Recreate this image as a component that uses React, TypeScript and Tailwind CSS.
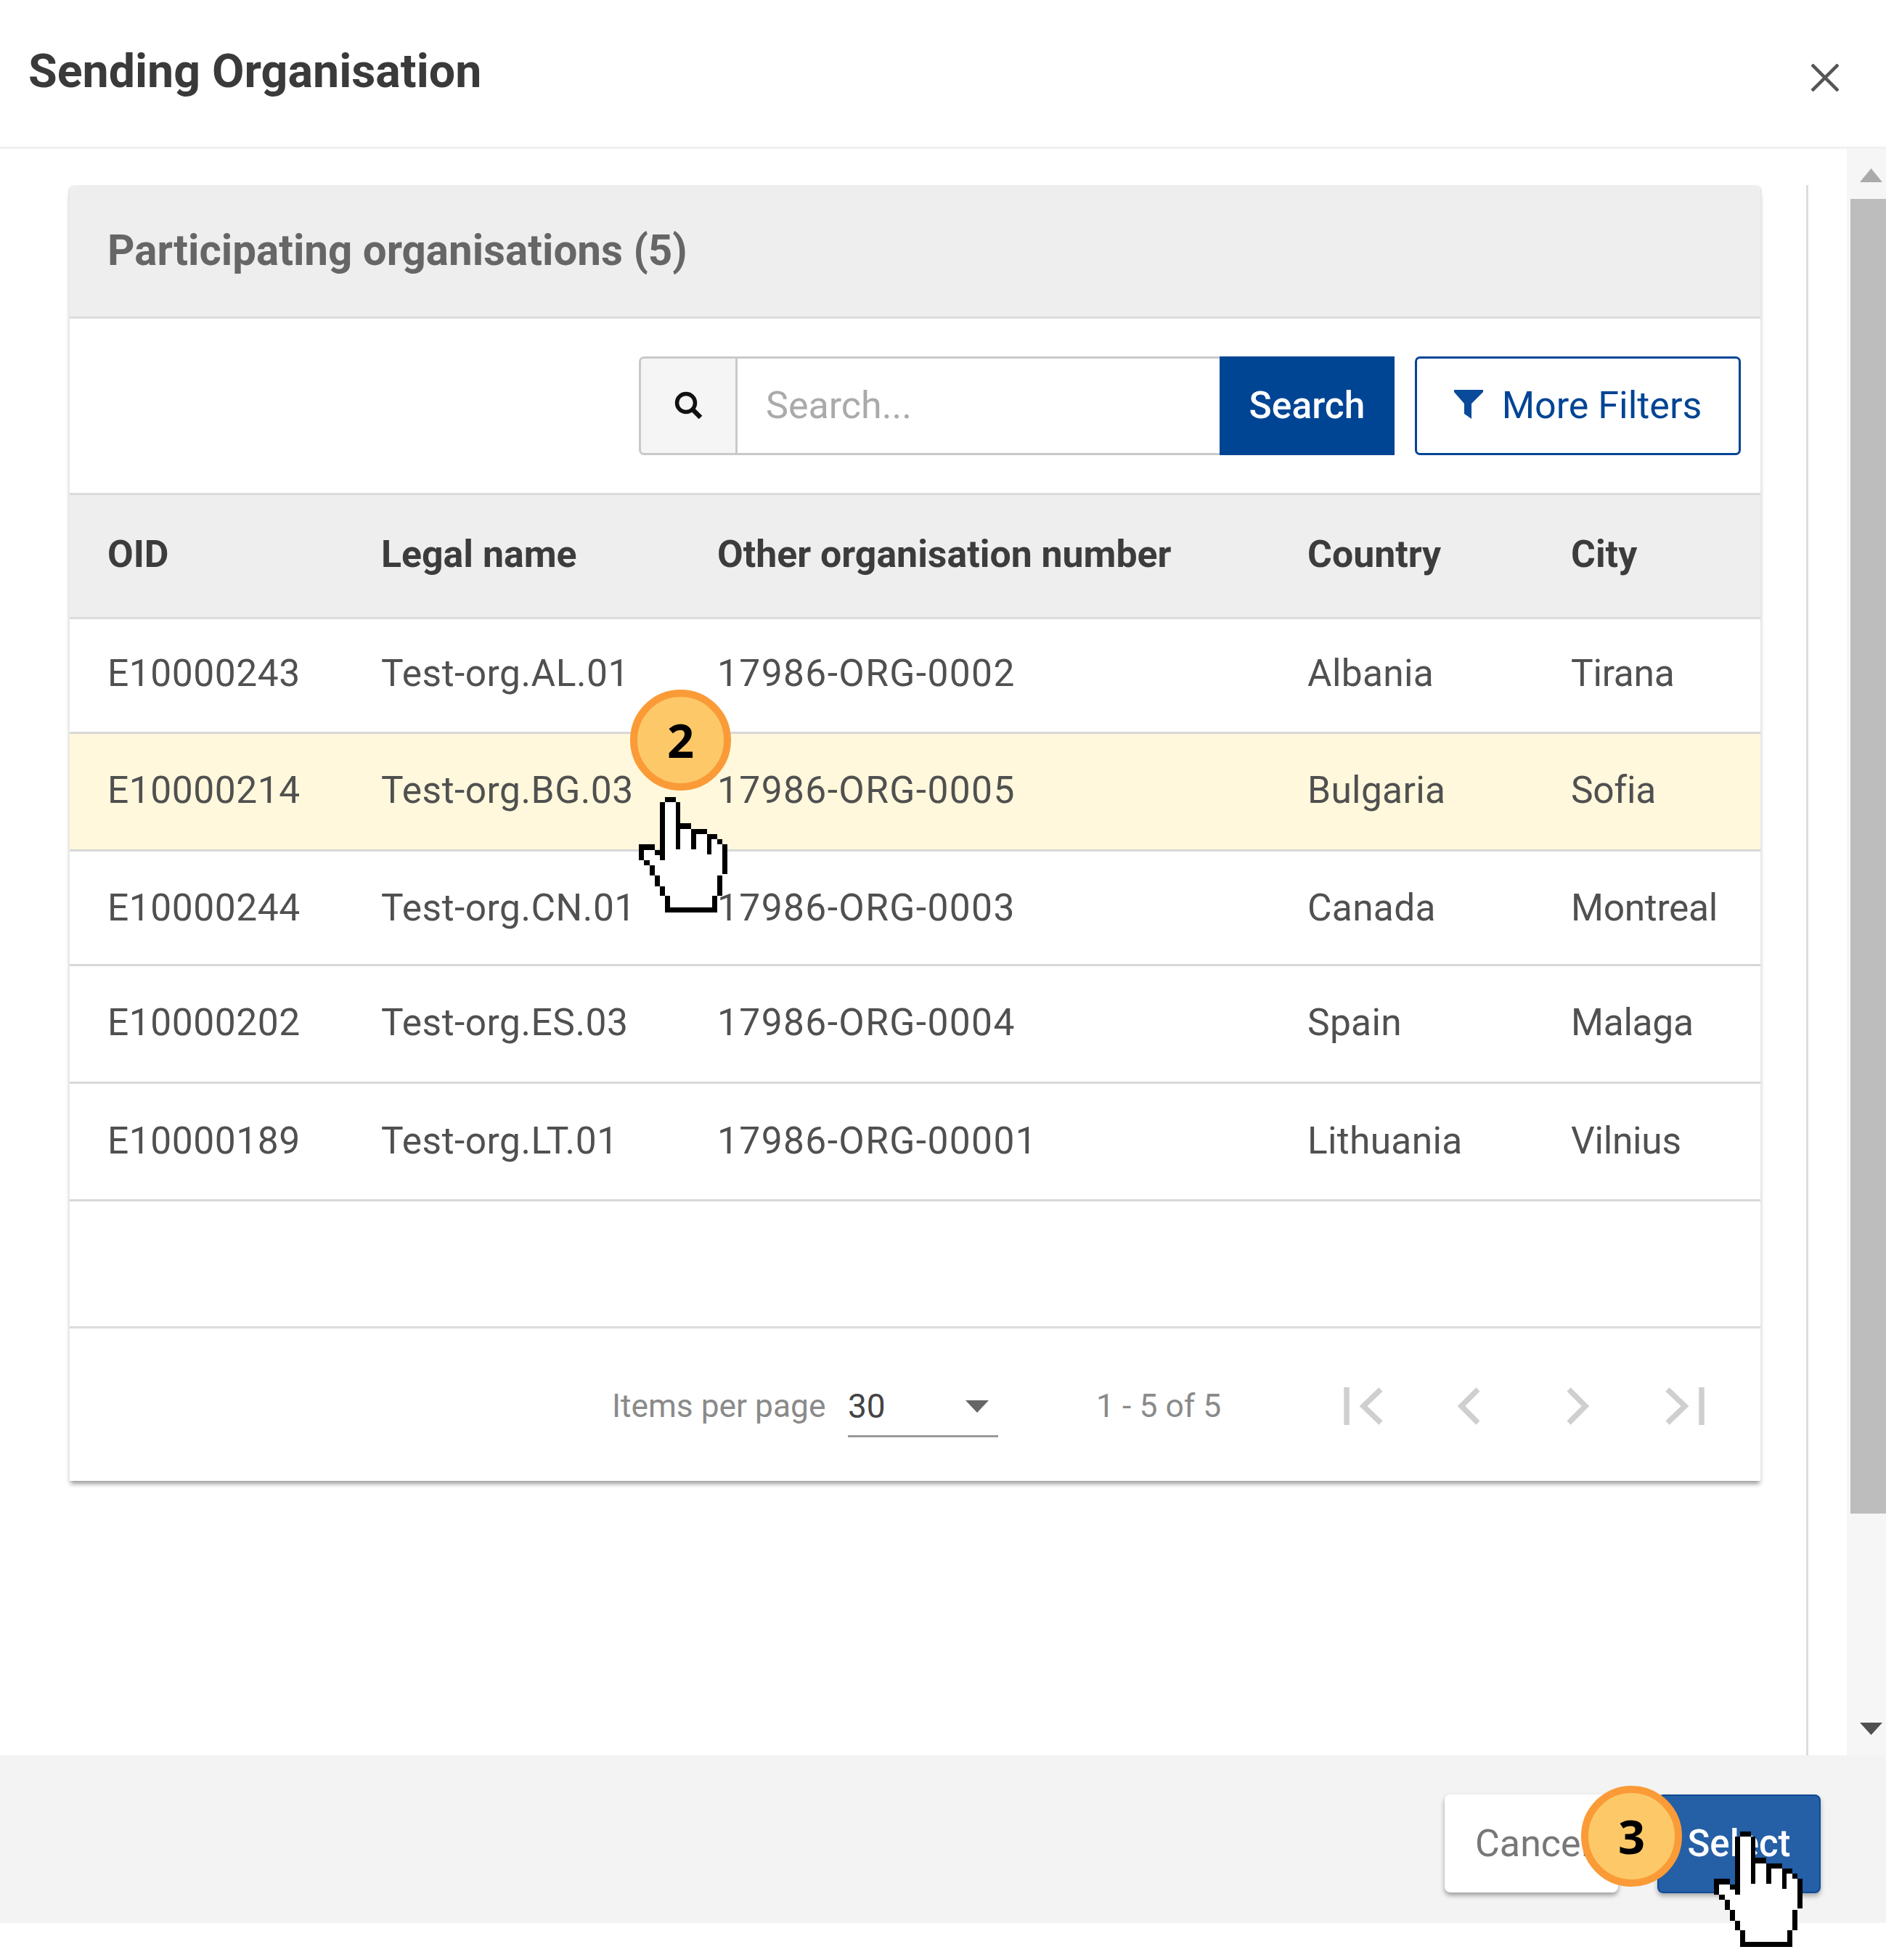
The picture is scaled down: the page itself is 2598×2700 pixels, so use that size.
import React from "react";

const rows = [
  ["E10000243", "Test-org.AL.01", "17986-ORG-0002", "Albania", "Tirana"],
  ["E10000214", "Test-org.BG.03", "17986-ORG-0005", "Bulgaria", "Sofia"],
  ["E10000244", "Test-org.CN.01", "17986-ORG-0003", "Canada", "Montreal"],
  ["E10000202", "Test-org.ES.03", "17986-ORG-0004", "Spain", "Malaga"],
  ["E10000189", "Test-org.LT.01", "17986-ORG-00001", "Lithuania", "Vilnius"],
];

const rowHeights = ["h-[158px] pb-[6px]", "h-[162px] pb-[3px]", "h-[158px] pb-0", "h-[162px] pb-[3px]", "h-[162px] pb-[2px]"];
const cellClasses = ["tracking-[0.55px]", "tracking-[0.5px]", "tracking-[1.4px]", "tracking-[0.3px]", "tracking-[-0.3px]"];

function Hand({ className }: { className: string }) {
  const blocks = [
    [108, 0, 44, 22], [87, 22, 21, 238], [152, 22, 20, 193], [172, 108, 43, 22],
    [215, 130, 22, 85], [237, 130, 43, 22], [280, 152, 20, 85], [300, 152, 23, 21],
    [323, 173, 22, 22], [345, 195, 20, 123], [323, 323, 22, 85], [302, 408, 21, 67],
    [108, 453, 194, 22], [108, 408, 22, 67], [87, 367, 21, 41], [66, 323, 21, 44],
    [44, 280, 22, 43], [22, 260, 22, 20], [0, 195, 22, 65], [0, 195, 66, 22], [66, 217, 21, 21],
  ];
  return (
    <svg viewBox="0 0 365 475" className={className} shapeRendering="crispEdges">
      <path
        fill="#fff"
        d="M108 10H152V120H215V140H280V160H323V180H345V318H323V408H302V460H108V408H87V367H66V323H44V280H22V260H10V205H66V225H87V22H108Z"
      />
      {blocks.map((b, i) => (
        <rect key={i} x={b[0]} y={b[1]} width={b[2]} height={b[3]} fill="#000" />
      ))}
    </svg>
  );
}

function Badge({ n, className }: { n: string; className: string }) {
  return (
    <div
      className={`absolute w-[139px] h-[139px] rounded-full border-[10px] border-[#fa9b37] bg-[#fdc968] flex items-center justify-center text-[65px] font-bold text-black leading-none font-['Open_Sans',sans-serif] ${className}`}
    >
      {n}
    </div>
  );
}

function PagerIcon({ d, w, bar }: { d: string; w: number; bar?: number }) {
  return (
    <svg width={w} height={52} viewBox={`0 0 ${w} 52`} className="block">
      {bar !== undefined && <path d={`M${bar} 0V52`} stroke="#cfcfcf" strokeWidth={7.5} fill="none" />}
      <path d={d} stroke="#cfcfcf" strokeWidth={7.5} fill="none" />
    </svg>
  );
}

export default function App() {
  return (
    <div className="relative w-[2598px] h-[2700px] overflow-hidden bg-white flex flex-col font-['Roboto',sans-serif]">
      {/* Dialog header */}
      <header className="h-[205px] shrink-0 border-b-[3px] border-[#f0f0f0] flex items-start justify-between pl-[39px] pr-[65px]">
        <h1 className="mt-[53px] text-[64.5px] leading-[90px] font-bold text-[#3a3a3a]">Sending Organisation</h1>
        <svg width="38" height="38" viewBox="0 0 38 38" className="mt-[88px]">
          <path d="M1 1L37 37M37 1L1 37" stroke="#555555" strokeWidth="4.5" fill="none" />
        </svg>
      </header>

      {/* Body */}
      <div className="h-[2213px] shrink-0 flex">
        <div className="w-[2544px] shrink-0 pt-[50px]">
          <div className="w-[2491px] h-full border-r-[3px] border-[#dcdcdc] pl-[94px]">
            <section className="w-[2333px] h-[1785px] border-l-[2px] border-r-[2px] border-[#e8e8e8] rounded-t-[8px] shadow-[0_7px_6px_-3px_rgba(0,0,0,0.4)] flex flex-col bg-white">
              <div className="h-[184px] shrink-0 bg-[#eeeeee] border-b-[3px] border-[#dcdcdc] rounded-t-[8px] flex items-center pl-[52px]">
                <h2 className="text-[58.3px] font-bold text-[#666666]">Participating organisations (5)</h2>
              </div>

              <div className="h-[240px] shrink-0 flex justify-end items-start pt-[52px] pr-[27px]">
                <div className="flex h-[136px] w-[1041px]">
                  <div className="w-[133px] shrink-0 bg-[#f5f5f5] border-[3px] border-r-0 border-[#c9c9c9] rounded-l-[7px] flex items-center justify-center">
                    <svg width="40" height="38" viewBox="0 0 40 38" className="-mt-[3px]">
                      <circle cx="17" cy="16" r="12.5" stroke="#111" strokeWidth="5.5" fill="none" />
                      <path d="M26 25L37 36" stroke="#111" strokeWidth="6.5" fill="none" />
                    </svg>
                  </div>
                  <div className="flex-1 border-[3px] border-r-0 border-[#c9c9c9] flex items-center pl-[39px] text-[52px] text-[#aaaaaa]">
                    Search...
                  </div>
                  <button className="w-[241px] shrink-0 bg-[#004494] text-white text-[51.5px] font-medium flex items-center justify-center">
                    Search
                  </button>
                </div>
                <button className="ml-[28px] w-[449px] h-[136px] shrink-0 border-[3px] border-[#004494] rounded-[7px] flex items-center justify-center gap-[26px] text-[52px] text-[#004494]">
                  <svg width="40" height="40" viewBox="0 0 40 40" className="-mt-[4px]">
                    <path d="M0 0H40V3L24 19V40L14 33V19L0 3Z" fill="#0a4a9a" />
                  </svg>
                  More Filters
                </button>
              </div>

              <div className="h-[174px] shrink-0 bg-[#eeeeee] border-y-[3px] border-[#dcdcdc] grid grid-cols-[377px_463px_813px_363px_1fr] items-center pl-[52px] pb-[4px] text-[51.8px] font-bold text-[#3c3c3c]">
                <div>OID</div>
                <div>Legal name</div>
                <div>Other organisation number</div>
                <div>Country</div>
                <div>City</div>
              </div>

              {rows.map((r, i) => (
                <div
                  key={r[0]}
                  className={`${rowHeights[i]} shrink-0 border-b-[3px] border-[#d8d8d8] grid grid-cols-[377px_463px_813px_363px_1fr] items-center pl-[52px] text-[51.5px] text-[#505050] ${
                    i === 1 ? "bg-[#fff8dc]" : "bg-white"
                  }`}
                >
                  {r.map((c, j) => (
                    <div key={c} className={cellClasses[j]}>{c}</div>
                  ))}
                </div>
              ))}

              <div className="h-[175px] shrink-0 border-b-[3px] border-[#dcdcdc]" />

              <div className="flex-1 flex items-start pl-[747px] pt-[73px]">
                <span className="text-[44.3px] leading-[68px] text-[#8a8a8a] w-[325px]">Items per page</span>
                <div className="relative w-[207px] h-[77px] border-b-[3px] border-[#999999] text-[46px] leading-[68px] text-[#444444]">
                  30
                  <svg width="32" height="17" viewBox="0 0 32 17" className="absolute right-[13px] top-[26px]">
                    <path d="M0 0H32L16 17Z" fill="#666666" />
                  </svg>
                </div>
                <span className="ml-[135px] text-[44.5px] leading-[68px] text-[#8a8a8a] w-[341px]">1 - 5 of 5</span>
                <div className="flex items-center mt-[8px]">
                  <PagerIcon w={54} bar={4} d="M51 3L27 26L51 49" />
                  <div className="ml-[103px]"><PagerIcon w={30} d="M28 3L5 26L28 49" /></div>
                  <div className="ml-[121px]"><PagerIcon w={30} d="M2 3L25 26L2 49" /></div>
                  <div className="ml-[105px]"><PagerIcon w={54} bar={50} d="M3 3L27 26L3 49" /></div>
                </div>
              </div>
            </section>
          </div>
        </div>

        {/* Scrollbar */}
        <div className="w-[54px] shrink-0 bg-[#f6f6f6] flex flex-col items-end">
          <div className="h-[69px] w-full shrink-0 pt-[27px] pl-[18px]">
            <svg width="31" height="19" viewBox="0 0 31 19"><path d="M15.5 0L31 19H0Z" fill="#aaaaaa" /></svg>
          </div>
          <div className="w-[49px] h-[1811px] shrink-0 bg-[#bdbdbd]" />
          <div className="pt-[288px] pr-[5px] w-full flex justify-end">
            <svg width="31" height="17" viewBox="0 0 31 17"><path d="M0 0H31L15.5 17Z" fill="#505050" /></svg>
          </div>
        </div>
      </div>

      {/* Footer */}
      <footer className="h-[231px] shrink-0 bg-[#f3f3f3] flex items-start justify-end pt-[54px] pr-[90px]">
        <button className="w-[239px] h-[135px] bg-white rounded-[8px] shadow-[0_4px_6px_rgba(0,0,0,0.35)] text-[52px] text-[#777777] pl-[42px] text-left">
          Cancel
        </button>
        <button className="ml-[54px] w-[225px] h-[136px] bg-[#255fa6] border-[2px] border-[#0f4a94] rounded-[8px] shadow-[0_4px_6px_rgba(0,0,0,0.3)] text-[51px] font-medium text-white">
          Select
        </button>
      </footer>

      {/* Annotation overlays */}
      <Badge n="2" className="left-[868px] top-[950px]" />
      <Hand className="absolute left-[880px] top-[1098px] w-[122px] h-[159px]" />
      <Badge n="3" className="left-[2178px] top-[2460px]" />
      <Hand className="absolute left-[2361px] top-[2523px] w-[122px] h-[159px]" />
    </div>
  );
}
